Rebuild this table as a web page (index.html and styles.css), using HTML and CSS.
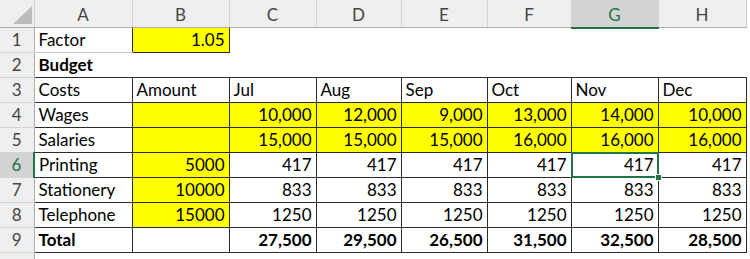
FILE: index.html
```html
<!DOCTYPE html>
<html>
<head>
<meta charset="utf-8">
<link rel="stylesheet" href="styles.css">
</head>
<body>
<table class="sheet">
  <colgroup>
    <col class="c-rh"><col class="c-a"><col class="c-b"><col class="c-c"><col class="c-d"><col class="c-e"><col class="c-f"><col class="c-g"><col class="c-h">
  </colgroup>
  <tr class="hdr">
    <th class="corner"><svg class="tri" width="34" height="27" viewBox="0 0 34 27"><polygon points="13,24 32,24 32,6" fill="#bcbcbc"/></svg></th>
    <th class="ch">A</th><th class="ch">B</th><th class="ch">C</th><th class="ch">D</th><th class="ch">E</th><th class="ch">F</th><th class="ch ch-sel">G</th><th class="ch">H</th>
  </tr>
  <tr>
    <th class="rh">1</th><td class="a1">Factor</td><td class="b y num">1.05</td><td></td><td></td><td></td><td></td><td></td><td></td>
  </tr>
  <tr>
    <th class="rh">2</th><td class="bold">Budget</td><td></td><td></td><td></td><td></td><td></td><td></td><td></td>
  </tr>
  <tr>
    <th class="rh">3</th><td class="b">Costs</td><td class="b">Amount</td><td class="b">Jul</td><td class="b">Aug</td><td class="b">Sep</td><td class="b">Oct</td><td class="b">Nov</td><td class="b">Dec</td>
  </tr>
  <tr>
    <th class="rh">4</th><td class="b">Wages</td><td class="b y"></td><td class="b y num">10,000</td><td class="b y num">12,000</td><td class="b y num">9,000</td><td class="b y num">13,000</td><td class="b y num">14,000</td><td class="b y num">10,000</td>
  </tr>
  <tr>
    <th class="rh">5</th><td class="b">Salaries</td><td class="b y"></td><td class="b y num">15,000</td><td class="b y num">15,000</td><td class="b y num">15,000</td><td class="b y num">16,000</td><td class="b y num">16,000</td><td class="b y num">16,000</td>
  </tr>
  <tr>
    <th class="rh rh-sel">6</th><td class="b">Printing</td><td class="b y num">5000</td><td class="b num">417</td><td class="b num">417</td><td class="b num">417</td><td class="b num">417</td><td class="b num sel">417<span class="handle"></span></td><td class="b num">417</td>
  </tr>
  <tr>
    <th class="rh">7</th><td class="b">Stationery</td><td class="b y num">10000</td><td class="b num">833</td><td class="b num">833</td><td class="b num">833</td><td class="b num">833</td><td class="b num">833</td><td class="b num">833</td>
  </tr>
  <tr>
    <th class="rh">8</th><td class="b">Telephone</td><td class="b y num">15000</td><td class="b num">1250</td><td class="b num">1250</td><td class="b num">1250</td><td class="b num">1250</td><td class="b num">1250</td><td class="b num">1250</td>
  </tr>
  <tr>
    <th class="rh">9</th><td class="b bold">Total</td><td class="b"></td><td class="b num bold">27,500</td><td class="b num bold">29,500</td><td class="b num bold">26,500</td><td class="b num bold">31,500</td><td class="b num bold">32,500</td><td class="b num bold">28,500</td>
  </tr>
  <tr class="r10">
    <th class="rh"></th><td></td><td></td><td></td><td></td><td></td><td></td><td></td><td></td>
  </tr>
</table>
</body>
</html>
```
FILE: styles.css
```css
html, body {
  margin: 0;
  padding: 0;
  background: #ffffff;
  overflow: hidden;
}

.sheet {
  border-collapse: collapse;
  table-layout: fixed;
  width: 746px;
  font-family: Lato, "Liberation Sans", sans-serif;
  font-size: 17px;
  color: #000;
}

.c-rh { width: 34px; }
.c-a { width: 98px; }
.c-b { width: 97px; }
.c-c { width: 87px; }
.c-d { width: 85px; }
.c-e { width: 86px; }
.c-f { width: 84px; }
.c-g { width: 87px; }
.c-h { width: 88px; }

.sheet tr { height: 25px; }
.sheet tr.hdr { height: 27px; }
.sheet tr.r10 { height: 12px; }

.sheet th,
.sheet td {
  padding: 0 4px;
  line-height: 24px;
  white-space: nowrap;
  overflow: hidden;
  vertical-align: bottom;
}

.sheet td { text-align: left; }

.ch {
  background: #efefef;
  color: #444;
  font-weight: normal;
  text-align: center;
  border-right: 1px solid #d2d2d2;
  border-bottom: 1px solid #ababab;
  vertical-align: middle;
}

.ch-sel {
  background: #d3d3d3;
  color: #217346;
  border-bottom: 2px solid #217346;
}

.corner {
  background: #efefef;
  border-right: 1px solid #d2d2d2;
  border-bottom: 1px solid #ababab;
  padding: 0 !important;
}

.tri {
  display: block;
}

.rh {
  background: #efefef;
  color: #444;
  font-weight: normal;
  text-align: center;
  border-bottom: 1px solid #d4d4d4;
  border-right: 1px solid #ababab;
}

.rh-sel {
  background: #d3d3d3;
  color: #217346;
  border-right: 2px solid #217346;
}

.a1 {
  border-bottom: 1px solid #c8c8c8;
}

.b {
  border: 1px solid #2b2b2b;
}

.y { background: #ffff00; }

.num { text-align: right !important; }

.bold { font-weight: bold; }

.sheet td.sel {
  position: relative;
  overflow: visible;
}

.sel::after {
  content: "";
  position: absolute;
  left: -1px;
  top: -1px;
  right: -1px;
  bottom: -1px;
  border: 2px solid #217346;
  pointer-events: none;
}

.handle {
  position: absolute;
  right: -4px;
  bottom: -4px;
  width: 5px;
  height: 5px;
  background: #217346;
  border: 1px solid #fff;
  z-index: 2;
}
```
